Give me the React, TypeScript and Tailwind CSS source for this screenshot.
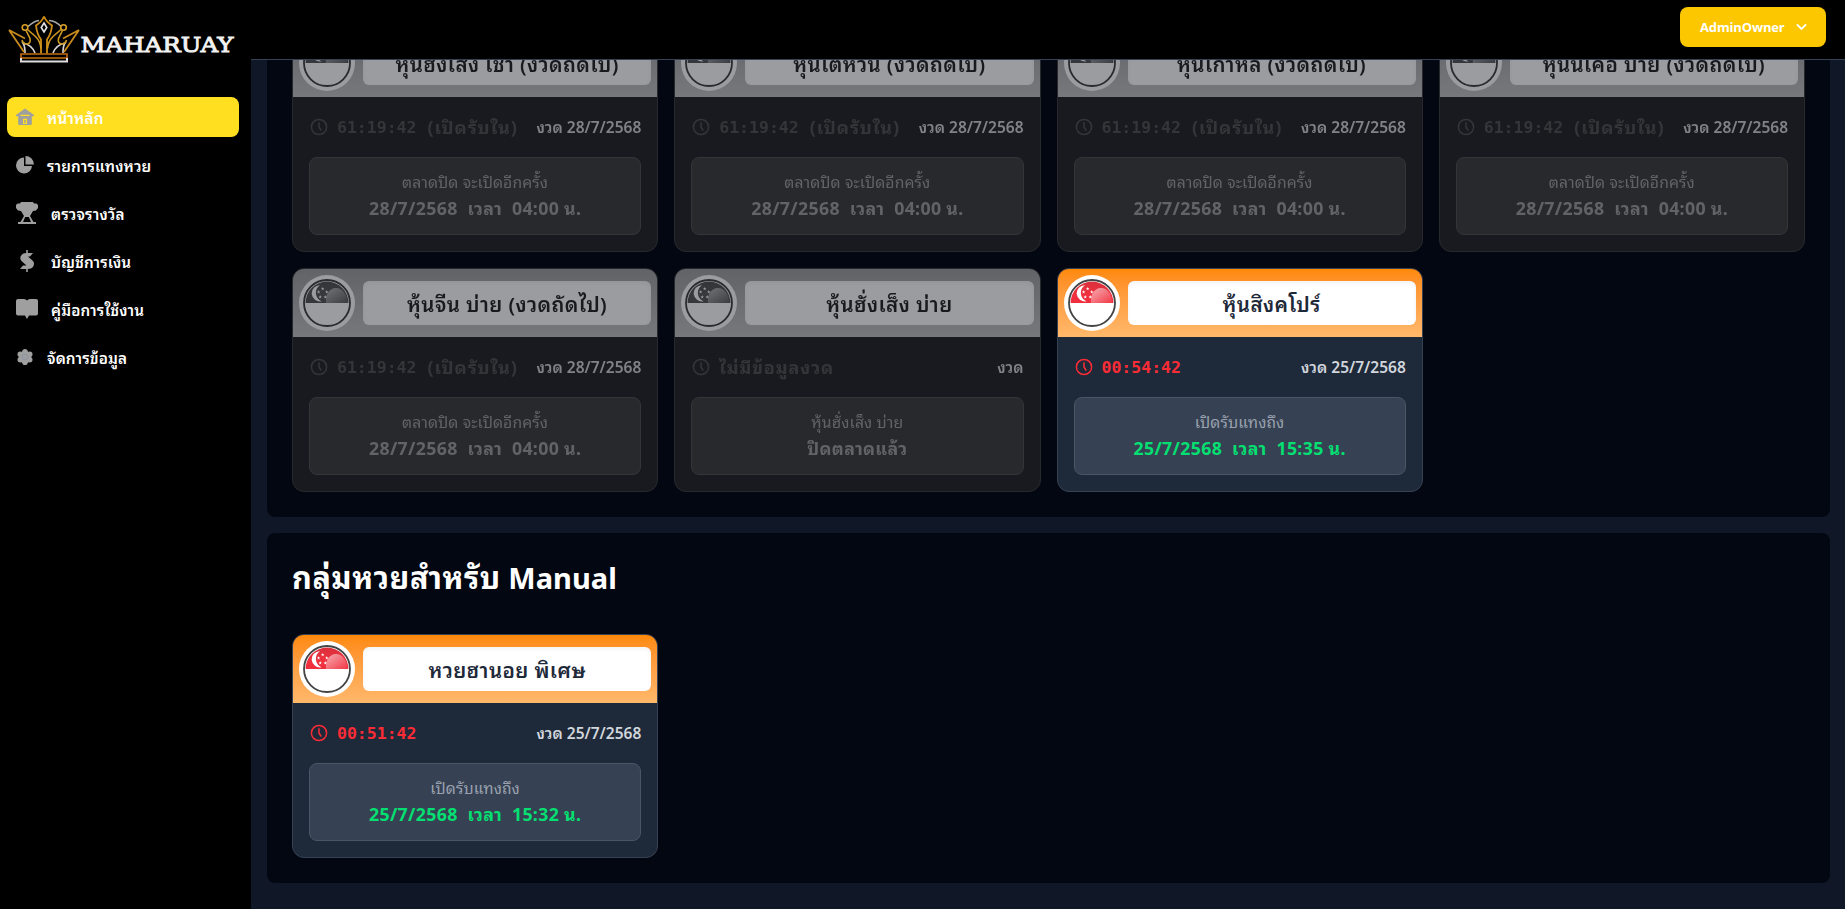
import React from "react";

type Lottery = {
  name: string;
  timer?: string;
  timerNote?: string;
  period: string;
  label: string;
  detail: string;
  open?: boolean;
};

const nextRound = {
  timer: "61:19:42",
  timerNote: "(เปิดรับใน)",
  period: "งวด 28/7/2568",
  label: "ตลาดปิด จะเปิดอีกครั้ง",
  detail: "28/7/2568  เวลา  04:00 น.",
};

const stocks: Lottery[] = [
  { name: "หุ้นฮั่งเส็ง เช้า (งวดถัดไป)", ...nextRound },
  { name: "หุ้นไต้หวัน (งวดถัดไป)", ...nextRound },
  { name: "หุ้นเกาหลี (งวดถัดไป)", ...nextRound },
  { name: "หุ้นนิเคอิ บ่าย (งวดถัดไป)", ...nextRound },
  { name: "หุ้นจีน บ่าย (งวดถัดไป)", ...nextRound },
  { name: "หุ้นฮั่งเส็ง บ่าย", timerNote: "ไม่มีข้อมูลงวด", period: "งวด", label: "หุ้นฮั่งเส็ง บ่าย", detail: "ปิดตลาดแล้ว" },
  { name: "หุ้นสิงคโปร์", timer: "00:54:42", period: "งวด 25/7/2568", label: "เปิดรับแทงถึง", detail: "25/7/2568  เวลา  15:35 น.", open: true },
];

const manual: Lottery[] = [
  { name: "หวยฮานอย พิเศษ", timer: "00:51:42", period: "งวด 25/7/2568", label: "เปิดรับแทงถึง", detail: "25/7/2568  เวลา  15:32 น.", open: true },
];

function Star({ x, y }: { x: number; y: number }) {
  return (
    <path
      transform={`translate(${x} ${y})`}
      fill="#fff"
      d="M0-1.9.5-.6 1.8-.6.7.25 1.1 1.5 0 .75-1.1 1.5-.7.25-1.8-.6-.5-.6Z"
    />
  );
}

function Flag() {
  return (
    <svg viewBox="0 0 56 56" className="size-14 shrink-0">
      <defs>
        <linearGradient id="flagRed" x1="0" y1="0" x2="0" y2="1">
          <stop offset="0" stopColor="#d9303c" />
          <stop offset="0.3" stopColor="#f0313f" />
          <stop offset="1" stopColor="#ee2536" />
        </linearGradient>
        <linearGradient id="flagShine" x1="0" y1="0" x2="1" y2="1">
          <stop offset="0" stopColor="#fff" stopOpacity="0.6" />
          <stop offset="1" stopColor="#fff" stopOpacity="0.05" />
        </linearGradient>
        <clipPath id="flagTop">
          <rect x="0" y="0" width="56" height="28" />
        </clipPath>
      </defs>
      <circle cx="28" cy="28" r="28" fill="#fff" />
      <circle cx="28" cy="28" r="23" fill="#fff" stroke="#444" strokeWidth="1.8" />
      <g clipPath="url(#flagTop)">
        <circle cx="28" cy="28" r="21.4" fill="url(#flagRed)" />
        <path d="M21 10.300a8.050 8.050 0 1 0 1.500 15.900 9 9 0 0 1-1.500-15.900Z" fill="#fff" />
        <Star x={23.7} y={13.8} />
        <Star x={19.6} y={17} />
        <Star x={27.8} y={17} />
        <Star x={21.2} y={22} />
        <Star x={26.3} y={22} />
        <path d="M27 28c-1-8 3-14 9-15 7-1 12 6 12.500 15Z" fill="url(#flagShine)" />
      </g>
    </svg>
  );
}

function Clock() {
  return (
    <svg viewBox="0 0 20 20" className="size-5 shrink-0" fill="none" stroke="currentColor" strokeWidth="1.500" strokeLinecap="round" strokeLinejoin="round">
      <circle cx="10" cy="10" r="7.600" />
      <path d="M10 5.800V10l1.900 3" />
    </svg>
  );
}

function Card({ item }: { item: Lottery }) {
  const open = item.open;
  return (
    <article className={"h-56 overflow-hidden rounded-xl border border-[#364153] bg-[#1e2939] " + (open ? "" : "opacity-60 grayscale")}>
      <div className={"flex h-[68px] items-center gap-2 bg-linear-to-b px-1.5 " + (open ? "from-[#ff8904] to-[#ffb86a]" : "from-[#a0a1a5] to-[#c3c4c8]")}>
        <Flag />
        <h3 className="flex h-11 flex-1 items-center justify-center rounded-md bg-white pt-0.5 text-[20.500px] font-semibold tracking-[0.400px] whitespace-nowrap text-[#1e2939] shadow-[inset_0_2px_4px_rgba(0,0,0,0.05)]">
          {item.name}
        </h3>
      </div>
      <div className="px-4 pt-4">
        <div className="flex h-7 items-center justify-between">
          <div className={"flex items-center gap-2 " + (open ? "text-[#fb2c36]" : "text-[#4a5565]")}>
            <Clock />
            <div className="flex h-6 items-center gap-[11px] font-bold whitespace-nowrap">
              {item.timer && <span className="pt-0.5 font-['DejaVu_Sans_Mono',monospace] text-[16.500px] leading-6">{item.timer}</span>}
              {item.timerNote && <span className="text-[18px] leading-6 tracking-[0.900px]">{item.timerNote}</span>}
            </div>
          </div>
          <span className="pt-0.5 text-[15.500px] font-semibold whitespace-nowrap text-[#d1d5dc]">{item.period}</span>
        </div>
        <div className="mt-4 flex h-[78px] flex-col items-center justify-center rounded-lg border border-[#4a5565] bg-[#364153]">
          <p className="h-6 text-[15.750px] leading-6 tracking-[0.100px] text-[#99a1af]">{item.label}</p>
          <p className={"h-7 text-[17.750px] leading-7 font-bold tracking-[0.320px] whitespace-pre " + (open ? "text-[#05df72]" : "text-[#99a1af]")}>{item.detail}</p>
        </div>
      </div>
    </article>
  );
}

function Logo() {
  return (
    <div className="flex h-[78px] items-start pt-[15px] pl-2">
      <svg viewBox="0 0 74 50" className="h-[50px] w-[74px] shrink-0" fill="none" strokeWidth="1.600">
        <path d="M20 11.500Q26 6 31 5.500M41 5.500Q48 6 53 11.500" stroke="#a8a8a8" />
        <path d="M17 38q0-7-2-10 9 2 12 10M55 38q0-7 2-10-9 2-12 10" stroke="#d8d8d8" />
        <path d="M1 15l16 8.500M1 15l15 22M71 15l-16 8.500M71 15L56 37" stroke="#c98a1e" strokeWidth="1.800" />
        <path d="M36 1.500q-2 5-8 9 1 9 5 14v14M36 1.500q2 5 8 9-1 9-5 14v14" stroke="#d08f16" strokeWidth="1.800" />
        <circle cx="17" cy="12.500" r="2.800" stroke="#d9a026" />
        <circle cx="55.500" cy="12.500" r="2.800" stroke="#d9a026" />
        <path d="M18 15.500l4 8q1 5-3 5.500-4 0-5-4M19.500 14.500l8 7q5 5 5.500 12M54.500 15.500l-4 8q-1 5 3 5.500 4 0 5-4M53 14.500l-8 7q-5 5-5.500 12" stroke="#d09a20" />
        <path d="M36 8l2.800 4.500-2.800 4.500-2.800-4.500Z" stroke="#e4e4e4" />
        <path d="M13 39h46v4H13Z" stroke="#c06d12" />
        <path d="M13 43v3.500h46V43" stroke="#ddd" strokeWidth="2" />
      </svg>
      <svg viewBox="0 0 158 30" className="mt-3.5 -ml-0.5 h-[30px] w-[158px]">
        <text x="0.500" y="22.500" textLength="153" lengthAdjust="spacingAndGlyphs" fill="#f2f2f2" stroke="#f2f2f2" strokeWidth="0.900" className="font-['DejaVu_Serif',serif] text-[21px]">MAHARUAY</text>
      </svg>
    </div>
  );
}

const navItems: { label: string; icon: React.ReactNode }[] = [
  {
    label: "หน้าหลัก",
    icon: (
      <svg viewBox="0 0 18 18" className="size-[18px]" fill="#9f9f9f">
        <path d="M9 .5 18 7v1.300H0V7Z" />
        <path d="M2.200 7h13.600v9q0 1-1 1H3.200q-1 0-1-1Z" />
        <path d="M4.500 6.800h9v1.100h-9ZM7 10.800h4V16H7Z" fill="#ffdf20" />
        <path d="M8.300 12h1.400v3H8.300Z" />
      </svg>
    ),
  },
  {
    label: "รายการแทงหวย",
    icon: (
      <svg viewBox="0 0 18 18" className="size-[18px]" fill="#9f9f9f">
        <path d="M8 1.500V10h8A8 8 0 1 1 8 1.500Z" />
        <path d="M9.500 0A8.500 8.500 0 0 1 18 8.500H9.500Z" />
      </svg>
    ),
  },
  {
    label: "ตรวจรางวัล",
    icon: (
      <svg viewBox="0 0 22 22" className="size-[22px]" fill="#9f9f9f">
        <path d="M5 0h12l1 1.500h2.500L22 3v3l-2 2.500-3 .5-3 5 3.500 6H20v2H2v-2h2.500L8 14 5 9l-3-.5L0 6V3l1.500-1.500H4Z" />
        <path d="m9.200 15-2.200 5h8l-2.200-5Z" fill="#000" />
      </svg>
    ),
  },
  {
    label: "บัญชีการเงิน",
    icon: (
      <svg viewBox="0 0 22 22" className="size-[22px]" fill="#9f9f9f">
        <path d="M10.200 0h1.600v3H17l-3 3.500h-2L17 11q2 2.500 0 6-1.500 2-5.200 2v3h-1.600v-3H4l3-3.500h3.500L5.500 11Q3 8 5.500 5q1.500-2 4.700-2Z" />
      </svg>
    ),
  },
  {
    label: "คู่มือการใช้งาน",
    icon: (
      <svg viewBox="0 0 22 22" className="size-[22px]" fill="#9f9f9f">
        <path d="M2 1h6q2 0 3 1.500Q12 1 14 1h6q2 0 2 2v12.500q0 2-2 2h-7L11 21l-2-3.500H2q-2 0-2-2V3q0-2 2-2Z" />
      </svg>
    ),
  },
  {
    label: "จัดการข้อมูล",
    icon: (
      <svg viewBox="0 0 18 18" className="size-[18px]" fill="#9f9f9f">
        <circle cx="9" cy="9" r="6.300" />
        <circle cx="9" cy="3.600" r="2.700" />
        <circle cx="9" cy="14.400" r="2.700" />
        <circle cx="4.200" cy="6.200" r="2.700" />
        <circle cx="13.800" cy="6.200" r="2.700" />
        <circle cx="4.200" cy="11.800" r="2.700" />
        <circle cx="13.800" cy="11.800" r="2.700" />
        <circle cx="9" cy="9" r="2.800" fill="none" stroke="#8d95a5" />
      </svg>
    ),
  },
];

function Sidebar() {
  return (
    <aside className="flex w-[251px] shrink-0 flex-col bg-black">
      <Logo />
      <nav className="mt-[19px] flex flex-col gap-2 pr-3 pl-[7px]">
        {navItems.map((n, i) => (
          <a key={n.label} className={"flex h-10 items-center rounded-lg pl-[9px] text-[15.250px] font-semibold tracking-[0.120px] text-white " + (i === 0 ? "bg-[#ffdf20]" : "")}>
            {n.icon}
            <span className="ml-[13px] pt-0.5">{n.label}</span>
          </a>
        ))}
      </nav>
    </aside>
  );
}

export default function App() {
  return (
    <div className="flex h-[909px] w-full overflow-hidden bg-[#101828] font-['Segoe_UI','Noto_Sans','Noto_Sans_Thai_Looped','Noto_Looped_Thai','Loma','Waree','Noto_Sans_Thai',sans-serif]">
      <Sidebar />
      <div className="flex min-w-0 flex-1 flex-col">
        <header className="flex h-[60px] shrink-0 items-start justify-end border-b border-[#364153] bg-black pt-[7px] pr-[19px]">
          <button className="flex h-10 w-[146px] items-center justify-between rounded-lg bg-[#fdc700] pr-[19px] pl-5 font-['Open_Sans',sans-serif] text-[13px] font-bold tracking-[-0.150px] text-white">
            <span className="pt-px">AdminOwner</span>
            <svg viewBox="0 0 11 8" className="h-2 w-[11px]" fill="none" stroke="#fff" strokeWidth="1.900">
              <path d="m.9 1.300 4.600 4.700 4.600-4.700" />
            </svg>
          </button>
        </header>
        <main className="flex min-h-0 flex-1 flex-col justify-end gap-4 overflow-hidden pr-[15px] pb-[26px] pl-4">
          <section className="shrink-0 rounded-lg bg-[#030712] px-[25px] pb-[25px]">
            <div className="grid grid-cols-4 gap-4">
              {stocks.map((s) => <Card key={s.name} item={s} />)}
            </div>
          </section>
          <section className="h-[350px] shrink-0 rounded-lg bg-[#030712] px-[25px] pt-[25px]">
            <h2 className="h-9 pt-px text-[29px] leading-9 font-bold text-white">
              <span className="text-[30.500px] tracking-[0.600px]">กลุ่มหวยสำหรับ</span> Manual
            </h2>
            <div className="mt-10 grid grid-cols-4 gap-4">
              {manual.map((s) => <Card key={s.name} item={s} />)}
            </div>
          </section>
        </main>
      </div>
    </div>
  );
}
